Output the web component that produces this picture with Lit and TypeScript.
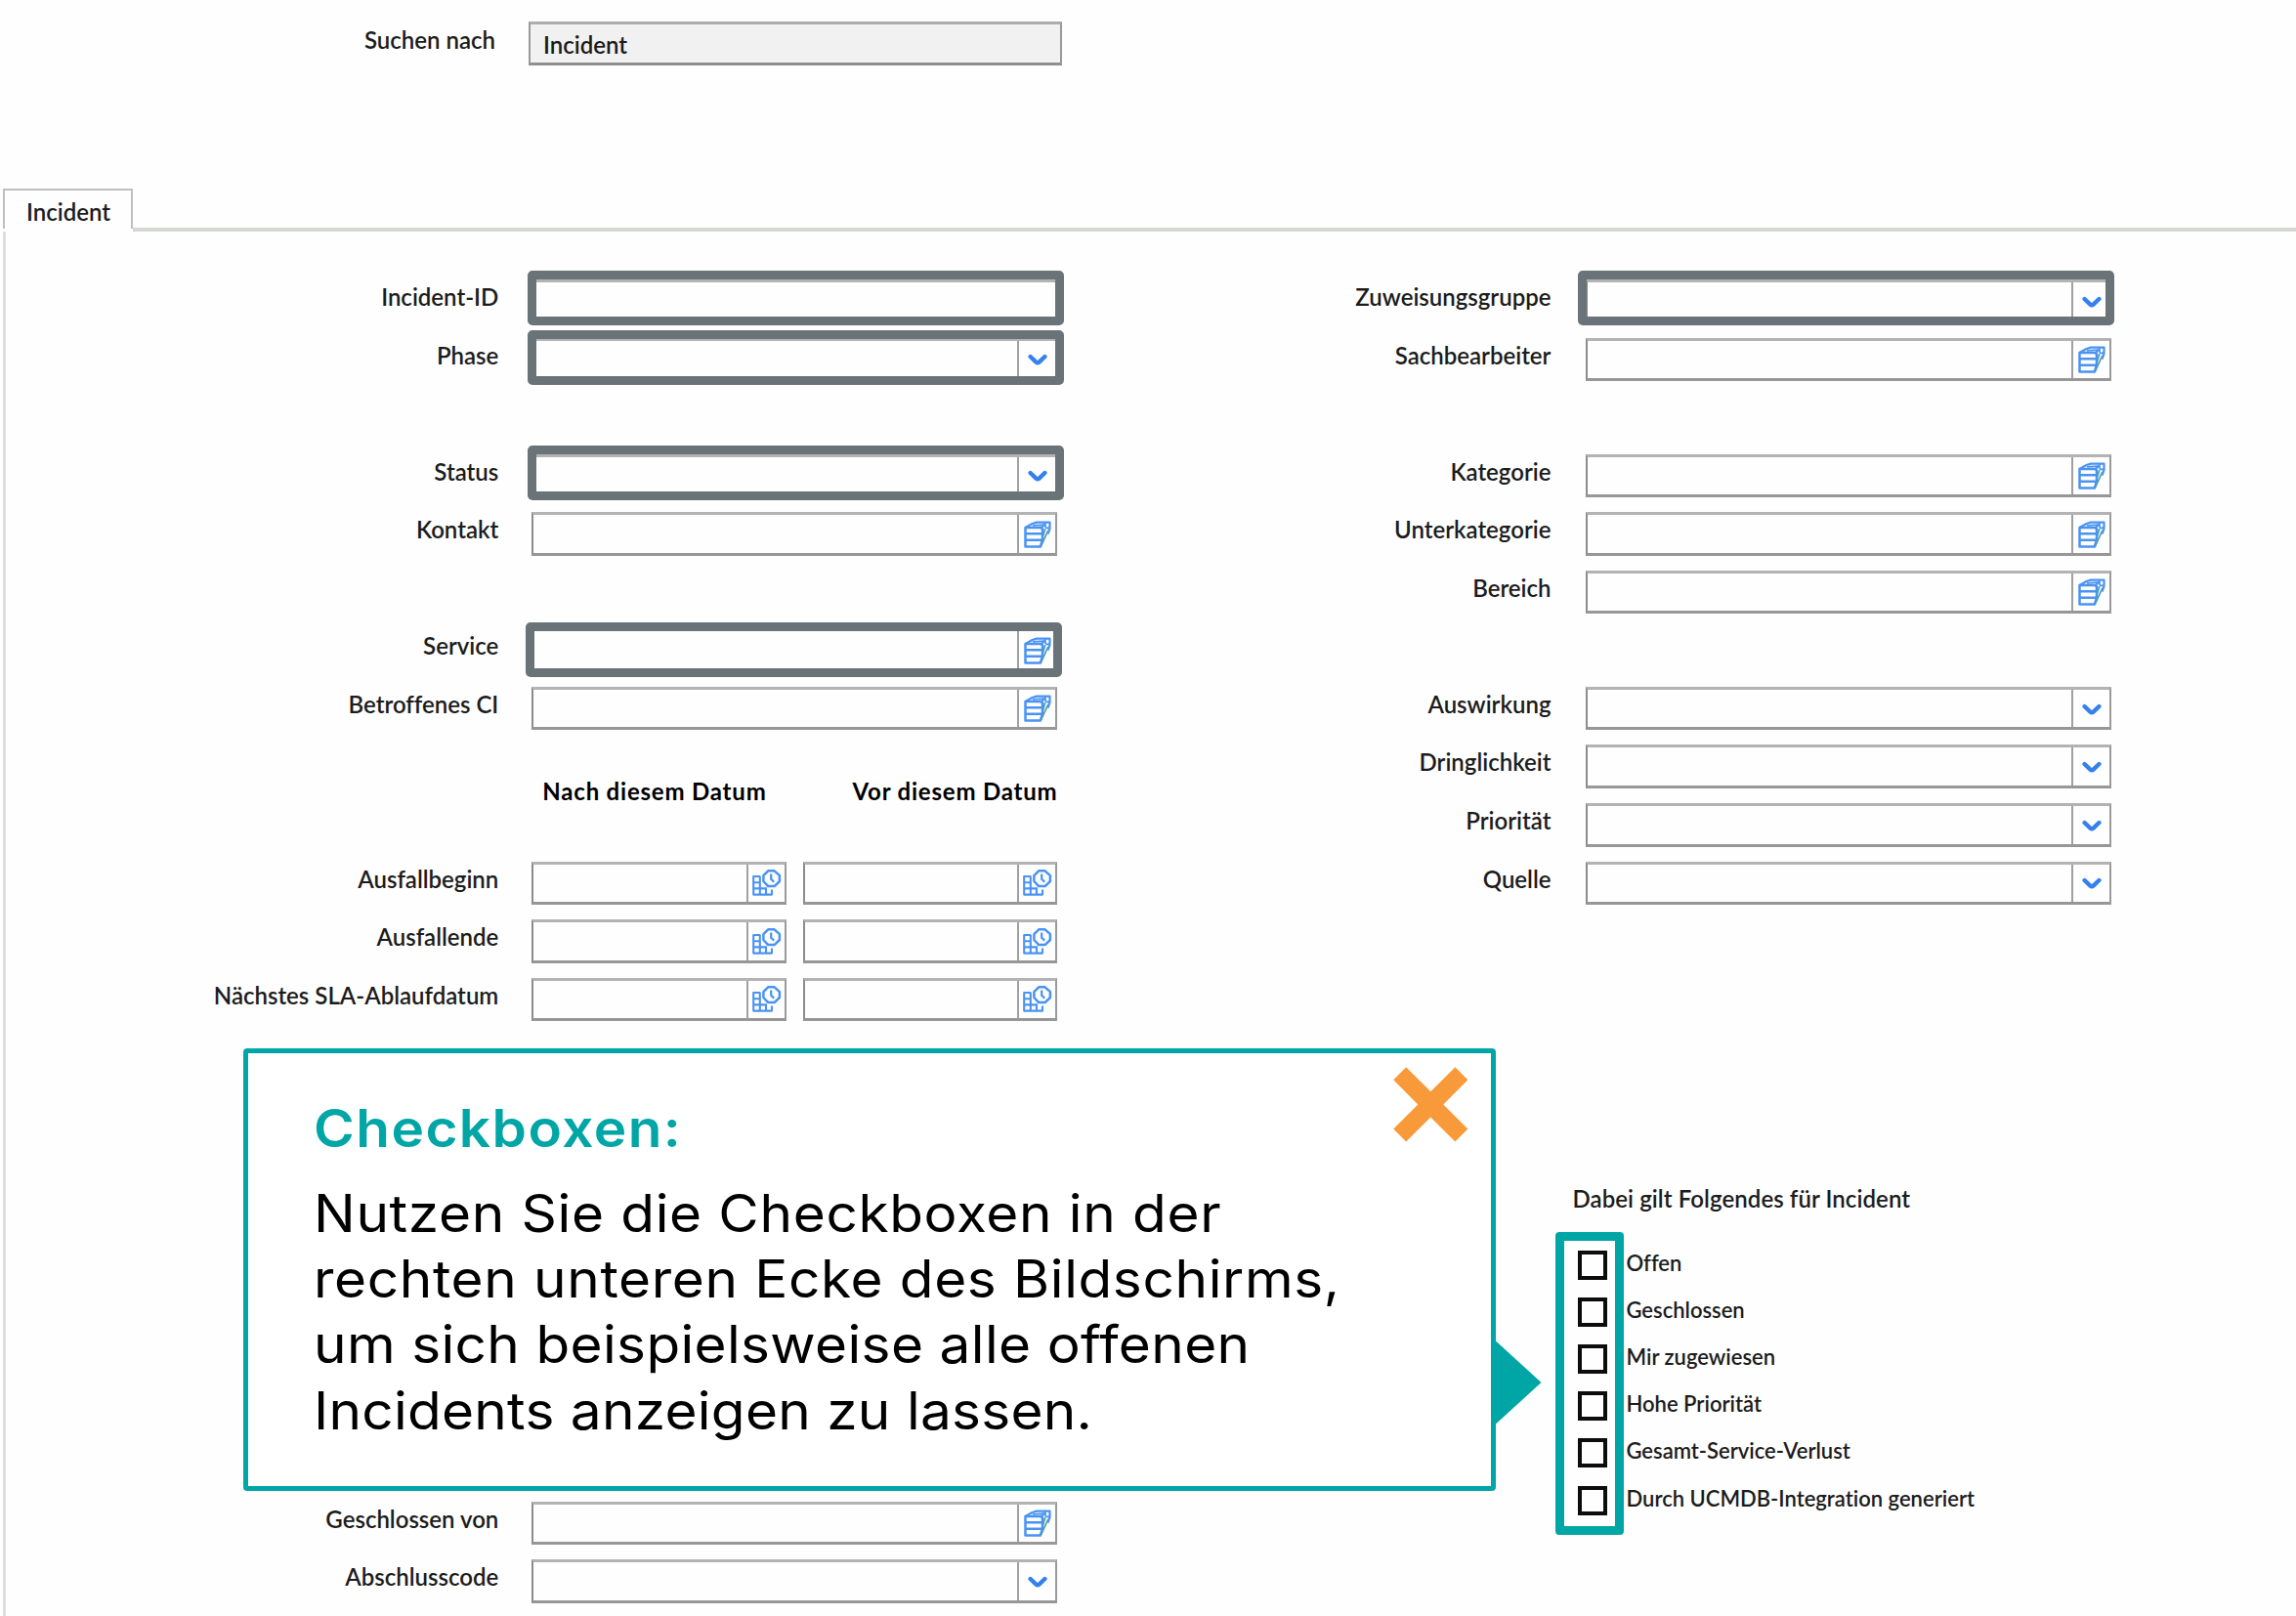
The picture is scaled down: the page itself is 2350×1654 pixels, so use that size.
import { LitElement, html, css, nothing, TemplateResult } from "lit";
import { customElement, property } from "lit/decorators.js";
import { classMap } from "lit/directives/class-map.js";

type FieldKind = "text" | "select" | "lookup" | "date";

interface FieldRow {
  row: number;
  label: string;
  kind: FieldKind;
  mark?: string;
}

const LEFT_ROWS: FieldRow[] = [
  { row: 1, label: "Incident-ID", kind: "text", mark: "a" },
  { row: 2, label: "Phase", kind: "select", mark: "b" },
  { row: 4, label: "Status", kind: "select", mark: "c" },
  { row: 5, label: "Kontakt", kind: "lookup" },
  { row: 7, label: "Service", kind: "lookup", mark: "d" },
  { row: 8, label: "Betroffenes CI", kind: "lookup" },
  { row: 11, label: "Ausfallbeginn", kind: "date" },
  { row: 12, label: "Ausfallende", kind: "date" },
  { row: 13, label: "Nächstes SLA-Ablaufdatum", kind: "date" },
  { row: 22, label: "Geschlossen von", kind: "lookup" },
  { row: 23, label: "Abschlusscode", kind: "select" },
];

const RIGHT_ROWS: FieldRow[] = [
  { row: 1, label: "Zuweisungsgruppe", kind: "select", mark: "e" },
  { row: 2, label: "Sachbearbeiter", kind: "lookup" },
  { row: 4, label: "Kategorie", kind: "lookup" },
  { row: 5, label: "Unterkategorie", kind: "lookup" },
  { row: 6, label: "Bereich", kind: "lookup" },
  { row: 8, label: "Auswirkung", kind: "select" },
  { row: 9, label: "Dringlichkeit", kind: "select" },
  { row: 10, label: "Priorität", kind: "select" },
  { row: 11, label: "Quelle", kind: "select" },
];

const OPTIONS = [
  "Offen",
  "Geschlossen",
  "Mir zugewiesen",
  "Hohe Priorität",
  "Gesamt-Service-Verlust",
  "Durch UCMDB-Integration generiert",
];

const ICONS: Record<string, TemplateResult> = {
  select: html`<svg class="chevron" width="20" height="13" viewBox="0 0 20 13">
    <path d="M2.6 3 L8.4 8.6 Q10 10 11.6 8.6 L17.4 3" fill="none" stroke="#3580ee" stroke-width="4.4" stroke-linecap="round" />
  </svg>`,
  lookup: html`<svg class="stack" width="28" height="28" viewBox="0 0 28 28">
    <g fill="none" stroke="#4a93f3" stroke-width="2.5" stroke-linejoin="round">
      <path d="M1.5 7 H17.5 L19 8.5 V20 L16.8 26.5 H1.5 Z" />
      <path d="M1.5 13.2 H18.6 M1.5 19.8 H18.6" />
      <path d="M1.5 7 L8.5 3 L13 1.6 H26.5 V8 L24.5 13.5" stroke-width="2.2" />
      <path d="M9 4.8 L21 4.2 M22 2 V6.5 Q24 8.5 26 6.5" stroke-width="1.7" />
      <path d="M18 7 L21.5 3.5" stroke-width="2" />
    </g>
    <path d="M24.8 10 L17.5 26 M21.8 8 L19.5 15.5" fill="none" stroke="#4f9fb4" stroke-width="1.8" />
  </svg>`,
  date: html`<svg class="calendar" width="30" height="27" viewBox="0 0 30 27">
    <g fill="none" stroke="#4a93f3" stroke-width="2.1">
      <path d="M8.3 7 H1.2 V25.6 H20 V20.5" stroke-linejoin="round" />
      <path d="M7.8 7 V25.6 M1.2 13.2 H8 M1.2 19.4 H15 M14 19.4 V25.6" />
      <path d="M16.2 1.3 H22.6 L27.9 6.2 V12 L22.6 17.1 H16.2 L11.4 12 V6.2 Z" stroke-width="2.5" stroke-linejoin="round" />
      <path d="M19.2 4.6 V9.8 L22.2 12.6" stroke-width="2.2" />
    </g>
  </svg>`,
};

@customElement("form-field")
export class FormField extends LitElement {
  @property() kind: FieldKind = "text";
  @property() mark = "";

  static styles = css`
    :host {
      display: block;
      position: relative;
      height: 44.5px;
    }
    .box {
      box-sizing: border-box;
      display: flex;
      height: 100%;
      border: 2px solid #8c8c8c;
      border-top: 3px solid #b3b3b3;
      border-right-color: #9a9a9a;
      border-bottom: 3px solid #979797;
    }
    .value {
      flex: 1;
    }
    .button {
      box-sizing: border-box;
      width: 39.5px;
      border-left: 2px solid #a0a0a0;
      display: flex;
      align-items: center;
      justify-content: center;
    }
    .chevron {
      margin: 2px 0 0 1px;
    }
    .stack,
    .calendar {
      margin-left: 1px;
    }
    .mark {
      position: absolute;
      box-sizing: border-box;
      left: -4.5px;
      top: -9px;
      width: 549.5px;
      height: 56px;
      border: 9px solid #6a7478;
      border-radius: 5px;
    }
    .mark.b {
      top: -8px;
    }
    .mark.d {
      left: -6.5px;
      top: -6.5px;
    }
    .mark.e {
      left: -8px;
    }
  `;

  render() {
    return html`
      <div class="box">
        <div class="value"></div>
        ${this.kind === "text" ? nothing : html`<div class="button">${ICONS[this.kind]}</div>`}
      </div>
      ${this.mark ? html`<div class=${classMap({ mark: true, [this.mark]: true })}></div>` : nothing}
    `;
  }
}

@customElement("app-root")
export class AppRoot extends LitElement {
  static styles = css`
    :host {
      display: block;
      font-family: Lato, "Liberation Sans", sans-serif;
      font-size: 24px;
      font-weight: 600;
      font-variant-ligatures: none;
      color: #1c1c1c;
    }
    .page {
      position: relative;
      display: flex;
      flex-direction: column;
      width: 2350px;
      height: 1654px;
      overflow: hidden;
      background: #fefefe;
    }
    .search {
      display: grid;
      grid-template-columns: 507px 546px;
      column-gap: 34px;
      height: 171px;
      padding-top: 21.5px;
      box-sizing: content-box;
    }
    .search .label {
      line-height: 37px;
    }
    .search-box {
      box-sizing: border-box;
      height: 45px;
      padding-left: 13px;
      border: 2px solid #999;
      border-top: 3px solid #adadad;
      border-bottom: 3px solid #8f8f8f;
      background: #f1f1f1;
      line-height: 41px;
    }
    .tabs {
      display: flex;
      height: 44px;
      padding-left: 3px;
    }
    .tab {
      box-sizing: border-box;
      width: 133px;
      height: 41px;
      padding-left: 22px;
      border: 2px solid #bdc0bd;
      border-bottom: none;
      line-height: 43px;
    }
    .rule {
      flex: 1;
      align-self: flex-end;
      height: 4px;
      background: #d3d9d1;
    }
    .panel {
      flex: 1;
      display: flex;
      margin-left: 3px;
      padding-top: 49.6px;
      border-left: 3px solid #dddfdd;
    }
    .form {
      display: grid;
      grid-template-rows: repeat(23, 59.55px);
      column-gap: 34px;
      height: 0;
    }
    .left {
      grid-template-columns: 504.3px 538.2px;
    }
    .right {
      grid-template-columns: 505px 538.5px;
      column-gap: 35.5px;
    }
    .label {
      text-align: right;
      line-height: 35.5px;
      white-space: nowrap;
      grid-column: 1;
    }
    .cell {
      grid-column: 2;
    }
    .dates {
      display: grid;
      grid-template-columns: 1fr 1fr;
      column-gap: 16.5px;
    }
    .heads {
      grid-column: 2;
      grid-row: 9;
      display: flex;
      justify-content: space-between;
      padding: 34px 0 0 11px;
      line-height: 28px;
      font-weight: 700;
      letter-spacing: 0.8px;
      color: #000;
      white-space: nowrap;
    }
    .group {
      grid-column: 1 / 3;
      grid-row: 16;
      padding: 32px 0 0 505px;
      white-space: nowrap;
    }
    .group-title {
      padding-left: 22px;
      line-height: 32px;
      letter-spacing: 0.08px;
    }
    .options {
      position: relative;
      display: flex;
      flex-direction: column;
      margin-top: 36.5px;
      padding-left: 28px;
    }
    .option {
      display: flex;
      height: 48.15px;
      font-size: 22px;
      line-height: 25px;
    }
    .check {
      box-sizing: border-box;
      width: 30px;
      height: 30px;
      margin-right: 19px;
      border: 4px solid #0c0c0c;
    }
    .options-mark {
      position: absolute;
      box-sizing: border-box;
      left: 4.5px;
      top: -19px;
      width: 70px;
      height: 310px;
      border: 9.5px solid #00a6a6;
      border-radius: 4px;
    }
    .callout {
      position: absolute;
      box-sizing: border-box;
      left: 249px;
      top: 1073px;
      width: 1282px;
      height: 452.5px;
      padding: 44px 0 0 66.5px;
      border: 5px solid #00a6a6;
      border-radius: 4px;
      background: #fff;
      color: #000;
      font-family: Inter, "Liberation Sans", sans-serif;
      font-size: 53px;
      font-weight: 400;
      line-height: 67.3px;
      white-space: nowrap;
    }
    .wide {
      transform: scaleX(1.07);
      transform-origin: left;
    }
    .title {
      margin-bottom: 19.5px;
      color: #00a6a6;
      font-weight: 600;
      letter-spacing: 1.35px;
    }
    .l1 {
      letter-spacing: 0.62px;
    }
    .l2 {
      letter-spacing: 0.6px;
    }
    .l3 {
      letter-spacing: 0.33px;
    }
    .l4 {
      letter-spacing: 0.26px;
    }
    .close {
      position: absolute;
      left: 1171.5px;
      top: 13.5px;
    }
    .pointer {
      position: absolute;
      left: 1276px;
      top: 295px;
    }
  `;

  private renderRow(r: FieldRow) {
    return html`
      <div class="label" style="grid-row:${r.row}">${r.label}</div>
      <div class=${classMap({ cell: true, dates: r.kind === "date" })} style="grid-row:${r.row}">
        <form-field kind=${r.kind} mark=${r.mark ?? ""}></form-field>
        ${r.kind === "date" ? html`<form-field kind="date"></form-field>` : nothing}
      </div>
    `;
  }

  render() {
    return html`
      <div class="page">
        <div class="search">
          <div class="label">Suchen nach</div>
          <div class="search-box">Incident</div>
        </div>
        <div class="tabs">
          <div class="tab">Incident</div>
          <div class="rule"></div>
        </div>
        <div class="panel">
          <div class="form left">
            ${LEFT_ROWS.map((r) => this.renderRow(r))}
            <div class="heads"><span>Nach diesem Datum</span><span>Vor diesem Datum</span></div>
          </div>
          <div class="form right">
            ${RIGHT_ROWS.map((r) => this.renderRow(r))}
            <div class="group">
              <div class="group-title">Dabei gilt Folgendes für Incident</div>
              <div class="options">
                ${OPTIONS.map((o) => html`<div class="option"><span class="check"></span><span>${o}</span></div>`)}
                <div class="options-mark"></div>
              </div>
            </div>
          </div>
        </div>
        <div class="callout">
          <div class="wide title">Checkboxen:</div>
          <div class="wide l1">Nutzen Sie die Checkboxen in der</div>
          <div class="wide l2">rechten unteren Ecke des Bildschirms,</div>
          <div class="wide l3">um sich beispielsweise alle offenen</div>
          <div class="wide l4">Incidents anzeigen zu lassen.</div>
          <svg class="close" width="77" height="77" viewBox="0 0 77 77">
            <path d="M13.2 0.3 L38.3 25.3 L63.4 0.3 L76.4 13.3 L51.3 38.4 L76.4 63.6 L63.4 76.6 L38.3 51.5 L13.2 76.6 L0.2 63.6 L25.3 38.4 L0.2 13.3 Z" fill="#f99a3a" />
          </svg>
          <svg class="pointer" width="48" height="84" viewBox="0 0 48 84">
            <path d="M0 0 H1.5 L47.5 42 L1.5 84 H0 Z" fill="#00a6a6" />
          </svg>
        </div>
      </div>
    `;
  }
}
